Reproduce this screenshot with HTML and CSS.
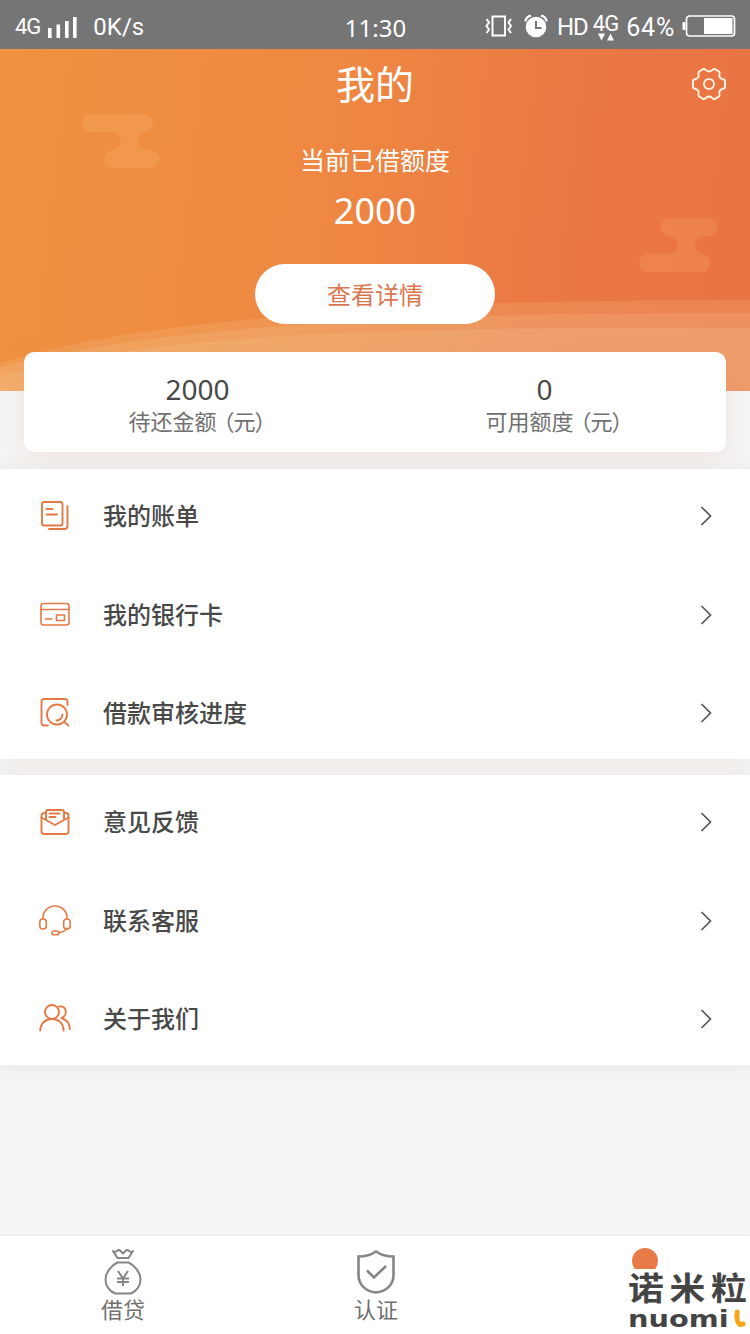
FILE: index.html
```html
<!DOCTYPE html>
<html lang="zh-CN">

<head>
  <meta charset="utf-8">
  <title>我的</title>
  <meta content="width=device-width, initial-scale=1" name="viewport" />
  <link rel="stylesheet" href="styles.css">
</head>

<body>
  <!-- Status bar -->
  <div class="status-bar">
    <div class="status-left">
      <span class="net">4G</span>
      <svg class="signal" width="30" height="24" viewBox="0 0 30 24" fill="#fff">
        <rect x="0" y="13" width="3.6" height="10"></rect>
        <rect x="8.5" y="9.5" width="3.6" height="13.5"></rect>
        <rect x="17" y="6" width="3.6" height="17"></rect>
        <rect x="25" y="2" width="3.6" height="21"></rect>
      </svg>
      <span class="speed">0K/s</span>
    </div>
    <span class="clock">11:30</span>
    <div class="status-right">
      <svg class="vibrate" width="28" height="24" viewBox="0 0 28 24" fill="none" stroke="#fff" stroke-width="2">
        <rect x="7.5" y="2.5" width="12.5" height="19"></rect>
        <path d="M1.5 5l2.5 3.5-2.5 3.5 2.5 3.5L1.5 19M26 5l-2.5 3.5 2.5 3.5-2.5 3.5L26 19"></path>
      </svg>
      <svg class="alarm" width="24" height="24" viewBox="0 0 24 24">
        <circle cx="12" cy="13" r="10.3" fill="#fff"></circle>
        <path d="M1.5 7.5Q2 2.5 7 1.6M22.5 7.5Q22 2.5 17 1.6" fill="none" stroke="#fff" stroke-width="2.2"></path>
        <path d="M12 7v7h5.5" fill="none" stroke="#757575" stroke-width="2"></path>
      </svg>
      <span class="hd">HD</span>
      <div class="data">
        <span>4G</span>
        <svg width="16" height="8" viewBox="0 0 16 8" fill="#fff">
          <path d="M0 0.5h7L3.5 7.5zM9 7.5h7L12.5 0.5z"></path>
        </svg>
      </div>
      <span class="percent">64%</span>
      <svg class="battery" width="54" height="22" viewBox="0 0 54 22">
        <rect x="4.5" y="1" width="48" height="20" rx="3" fill="none" stroke="#fff" stroke-width="1.7"></rect>
        <rect x="0.5" y="7" width="3" height="8" rx="1" fill="#fff"></rect>
        <rect x="22" y="3" width="28.5" height="16" fill="#fff"></rect>
      </svg>
    </div>
  </div>

  <!-- Header with current loan amount -->
  <div class="hero">
    <svg class="hero-bg" viewBox="0 0 750 342">
      <g fill="#f8e0b0" fill-opacity="0.15">
        <path d="M0 314C80 290 165 278 257 270C370 257 520 251 750 251V342H0z"></path>
        <path d="M0 319C70 299 165 287 257 279C370 269 520 264 750 264V342H0z"></path>
        <path d="M0 327C80 306 165 295 257 289C370 281 520 278 750 279V342H0z"></path>
      </g>
      <path fill="#f5a762" fill-opacity="0.4" d="M91 65h53a9 9 0 0 1 0 18c-8 2-8 14 0 18h7a9 9 0 0 1 0 18h-38a9 9 0 0 1 0-18c10-1 11-15 0-18h-22a9 9 0 0 1 0-18z"></path>
      <path fill="#f2935a" fill-opacity="0.45" d="M670 169h38a9 9 0 0 1 0 18h-7c-8 2-8 15 0 18a9 9 0 0 1 0 18h-53a9 9 0 0 1 0-18h22c10-1 11-16 0-18a9 9 0 0 1 0-18z"></path>
    </svg>
    <div class="title-bar">
      <h1 class="title">我的</h1>
      <svg class="settings" width="36" height="36" viewBox="0 0 36 36" fill="none" stroke="#fff1e2" stroke-width="2" stroke-linejoin="round">
        <path d="M12 3.2Q14 2.5 15 4.2Q18 6.5 21 4.2Q22 2.5 24 3.2L28 5.6Q29.2 6.8 28.3 8.6Q28 12.2 31.5 13Q34 13.5 34 15V21Q34 22.5 31.5 23Q28 24 28.3 27.4Q29.2 29.2 28 30.4L24 32.8Q22 33.5 21 31.8Q18 29.5 15 31.8Q14 33.5 12 32.8L8 30.4Q6.8 29.2 7.7 27.4Q8 24 4.5 23Q2 22.5 2 21V15Q2 13.5 4.5 13Q8 12.2 7.7 8.6Q6.8 6.8 8 5.6z"></path>
        <circle cx="18" cy="18" r="5"></circle>
      </svg>
    </div>
    <p class="hero-label">当前已借额度</p>
    <p class="hero-amount">2000</p>
    <a class="btn" href="#">查看详情</a>
  </div>

  <!-- Summary card -->
  <div class="summary">
    <div class="summary-item">
      <span class="summary-value">2000</span>
      <span class="summary-label">待还金额<span class="unit">（元）</span></span>
    </div>
    <div class="summary-item">
      <span class="summary-value">0</span>
      <span class="summary-label">可用额度<span class="unit">（元）</span></span>
    </div>
  </div>

  <div class="menu">
    <a class="menu-item" href="#">
      <svg class="menu-icon" viewBox="0 0 32 32">
        <rect x="3" y="2" width="20.5" height="23.5" rx="2"></rect>
        <path d="M7.5 9h6M7.5 14.5h10.5M28.5 6v20a3 3 0 0 1-3 3H10"></path>
      </svg>
      <span class="menu-text">我的账单</span>
      <svg class="arrow" viewBox="0 0 12 20"><path d="M1.5 1l9 9-9 9"></path></svg>
    </a>
    <a class="menu-item" href="#">
      <svg class="menu-icon thin" viewBox="0 0 32 32">
        <rect x="2" y="4.5" width="28" height="21.5" rx="2.5"></rect>
        <path d="M2 10.5h28M6.5 20h6.5"></path>
        <rect x="17.5" y="16" width="8" height="5.5"></rect>
      </svg>
      <span class="menu-text">我的银行卡</span>
      <svg class="arrow" viewBox="0 0 12 20"><path d="M1.5 1l9 9-9 9"></path></svg>
    </a>
    <a class="menu-item" href="#">
      <svg class="menu-icon" viewBox="0 0 32 32">
        <path d="M28.5 8V4.5A2.5 2.5 0 0 0 26 2H5a2.5 2.5 0 0 0-2.500 2.500V26A2.500 2.500 0 0 0 5 28.500h4M26 25.500l3.500 3"></path>
        <circle cx="18" cy="17.5" r="10"></circle>
        <path d="M23.5 17.5a6 6 0 0 1-6 6"></path>
      </svg>
      <span class="menu-text">借款审核进度</span>
      <svg class="arrow" viewBox="0 0 12 20"><path d="M1.5 1l9 9-9 9"></path></svg>
    </a>
  </div>

  <div class="menu">
    <a class="menu-item" href="#">
      <svg class="menu-icon" viewBox="0 0 32 32">
        <path d="M7 7H5a2.5 2.5 0 0 0-2.5 2.5v16A2.5 2.5 0 0 0 5 28h22a2.5 2.5 0 0 0 2.5-2.5v-16A2.5 2.5 0 0 0 27 7h-2"></path>
        <path d="M2.5 11.5L16 19l13.5-7.5M7 13.5V6a2 2 0 0 1 2-2h14a2 2 0 0 1 2 2v7.5M10.5 7.5h10M10.5 11h6"></path>
      </svg>
      <span class="menu-text">意见反馈</span>
      <svg class="arrow" viewBox="0 0 12 20"><path d="M1.5 1l9 9-9 9"></path></svg>
    </a>
    <a class="menu-item" href="#">
      <svg class="menu-icon thin" viewBox="0 0 32 32">
        <path d="M4 14v-1.5a12 11.5 0 0 1 24 0V14M28 23q-2 4-8 4.5"></path>
        <rect x="0.8" y="14" width="6.5" height="10" rx="3"></rect>
        <rect x="24.7" y="14" width="6.5" height="10" rx="3"></rect>
        <rect x="13" y="26" width="7" height="3.8" rx="1.9"></rect>
      </svg>
      <span class="menu-text">联系客服</span>
      <svg class="arrow" viewBox="0 0 12 20"><path d="M1.5 1l9 9-9 9"></path></svg>
    </a>
    <a class="menu-item" href="#">
      <svg class="menu-icon" viewBox="0 0 32 32">
        <circle cx="13" cy="9" r="7"></circle>
        <path d="M1.2 27.5C1.5 20 6.5 16 13 16s11.3 4 11.6 11.5M20 3.5c8-1.5 9 9 2.5 11.5 5 1.5 8 6 8.3 11"></path>
      </svg>
      <span class="menu-text">关于我们</span>
      <svg class="arrow" viewBox="0 0 12 20"><path d="M1.5 1l9 9-9 9"></path></svg>
    </a>
  </div>

  <!-- Bottom tabs -->
  <div class="tabs">
    <a class="tab" href="#">
      <svg width="38" height="48" viewBox="0 0 38 48" fill="none" stroke="#858585" stroke-width="2" stroke-linejoin="round">
        <path d="M13.5 10L9 3q2 1.500 4 0 2-2 3.500 0l2.500 2.500L21.500 3q1.500-2 3.500 0 2 1.500 4 0L24.500 10z"></path>
        <path d="M13.5 14.5h11C30 17 36.5 24 36.5 31.5 36.5 38 32 43 27 45.5H11C6 43 1.5 38 1.5 31.5 1.5 24 8 17 13.5 14.5z"></path>
        <path d="M14 23l5 7.5 5-7.5M19 30.5V38M13 30.5h12M13 34h12"></path>
      </svg>
      <span>借贷</span>
    </a>
    <a class="tab" href="#">
      <svg width="38" height="48" viewBox="0 0 38 48" fill="none" stroke="#858585" stroke-width="2.6">
        <path d="M19 3.5C14 7 8 8.5 1.5 8.5V27C1.5 37 9 43.5 19 44.5 29 43.5 36.5 37 36.5 27V8.5C30 8.5 24 7 19 3.5z"></path>
        <path d="M10 22.5l7 7L29 18"></path>
      </svg>
      <span>认证</span>
    </a>
    <a class="tab tab-mine" href="#">
      <span class="dot"></span>
    </a>
    <div class="brand">
      <span class="brand-cn">诺米粒</span>
      <div class="brand-en">
        <span>nuomi</span>
        <svg width="12" height="19" viewBox="0 0 12 19" fill="none" stroke="#f8a713" stroke-width="5" stroke-linecap="round">
          <path d="M3.2 3C2.5 9 3 14.5 6.5 15.5L9 15"></path>
        </svg>
      </div>
    </div>
  </div>
</body>

</html>
```

FILE: styles.css
```css
:root {
  --orange: #e37a46;
  --bg: #f4f4f4;
  --text: #484848;
  --sub: #707070;
}

* {
  box-sizing: border-box;
}

body {
  width: 750px;
  height: 1334px;
  margin: 0;
  display: flex;
  flex-direction: column;
  overflow: hidden;
  background-color: var(--bg);
  color: var(--text);
  font-family: "Noto Sans", "Noto Sans CJK SC", sans-serif;
}

h1,
p {
  margin: 0;
  font-weight: normal;
}

a {
  color: inherit;
  text-decoration: none;
}

svg {
  flex-shrink: 0;
}

/* Status bar */
.status-bar {
  height: 49px;
  flex-shrink: 0;
  display: grid;
  grid-template-columns: 1fr auto 1fr;
  align-items: center;
  padding: 4px 14px 0 15px;
  background-color: #757575;
  color: #fff;
  font-family: Roboto, sans-serif;
  font-size: 25px;
  line-height: 44px;
}

.status-left,
.status-right {
  display: flex;
  align-items: center;
}

.status-right {
  justify-content: flex-end;
}

.net {
  font-size: 22px;
  letter-spacing: -1px;
}

.signal {
  margin: 0 15px 0 8px;
}

.speed {
  font-size: 24px;
}

.clock {
  font-family: "Noto Sans", sans-serif;
  font-size: 24px;
  padding-top: 2px;
}

.vibrate {
  margin-top: -2px;
}

.alarm {
  margin: -2px 9px 0 11px;
}

.hd {
  font-size: 24px;
  letter-spacing: -1px;
  margin-right: 5px;
}

.data {
  display: flex;
  flex-direction: column;
  align-items: center;
  font-size: 22px;
  line-height: 19px;
  letter-spacing: -1px;
}

.percent {
  margin: 0 7px 0 8px;
  padding-top: 2px;
  letter-spacing: 0.8px;
}

.battery {
  margin-top: -2px;
}

/* Header */
.hero {
  position: relative;
  height: 342px;
  flex-shrink: 0;
  display: flex;
  flex-direction: column;
  align-items: center;
  background: linear-gradient(97deg, #f09240 0%, #ee8742 45%, #eb7943 72%, #ea7444 100%);
  color: #fff;
}

.hero-bg {
  position: absolute;
  inset: 0;
}

.title-bar {
  position: relative;
  width: 100%;
  height: 70px;
  padding: 0 23px;
  display: grid;
  grid-template-columns: 1fr auto 1fr;
  align-items: center;
}

.title {
  grid-column: 2;
  font-size: 39px;
  line-height: 70px;
}

.settings {
  justify-self: end;
}

.hero-label {
  position: relative;
  margin-top: 22px;
  font-size: 25px;
  line-height: 38px;
}

.hero-amount {
  position: relative;
  margin-top: 7px;
  font-size: 36px;
  line-height: 50px;
}

.btn {
  position: relative;
  width: 240px;
  height: 60px;
  margin-top: 28px;
  border-radius: 30px;
  background-color: #fff;
  color: #d97750;
  font-size: 24px;
  line-height: 61px;
  text-align: center;
}

/* Summary card */
.summary {
  position: relative;
  height: 100px;
  flex-shrink: 0;
  margin: -39px 24px 17px;
  padding-top: 20px;
  display: flex;
  border-radius: 10px;
  background-color: #fff;
  box-shadow: 0 4px 20px rgba(205, 150, 110, 0.15);
}

.summary-item {
  width: 347px;
  display: flex;
  flex-direction: column;
  align-items: center;
}

.summary-value {
  font-size: 28px;
  line-height: 34px;
}

.summary-label {
  padding-left: 9px;
  color: var(--sub);
  font-size: 22px;
  line-height: 31px;
}

.summary-item + .summary-item .summary-label {
  padding-left: 29px;
}

.unit {
  margin-left: -4px;
  letter-spacing: -1px;
}

/* Menu groups */
.menu {
  position: relative;
  height: 290px;
  flex-shrink: 0;
  margin-bottom: 16px;
  display: flex;
  flex-direction: column;
  gap: 4.5px;
  background-color: #fff;
  box-shadow: 0 0 16px rgba(205, 160, 130, 0.16);
}

.menu-item {
  height: 94px;
  flex-shrink: 0;
  padding: 0 38px 0 39px;
  display: flex;
  align-items: center;
}

.menu-icon {
  width: 32px;
  height: 32px;
  fill: none;
  stroke: var(--orange);
  stroke-width: 1.9;
  stroke-linecap: round;
  stroke-linejoin: round;
}

.menu-icon.thin {
  stroke-width: 1.6;
}

.menu-text {
  flex: 1;
  margin-left: 32px;
  padding-bottom: 3px;
  font-size: 24px;
  font-weight: 500;
}

.arrow {
  width: 12px;
  height: 20px;
  fill: none;
  stroke: #555;
  stroke-width: 1.7;
}

/* Bottom tabs */
.tabs {
  position: relative;
  height: 98px;
  flex-shrink: 0;
  margin-top: auto;
  display: grid;
  grid-template-columns: 246px 260px 244px;
  background-color: #fff;
  box-shadow: 0 -1px 2px rgba(0, 0, 0, 0.04);
}

.tab {
  display: flex;
  flex-direction: column;
  align-items: center;
  padding-top: 12px;
  color: var(--sub);
  font-size: 22px;
  line-height: 26px;
}

.tab-mine {
  padding-left: 34px;
}

.dot {
  width: 26px;
  height: 21px;
  overflow: hidden;
}

.dot::before {
  content: "";
  display: block;
  width: 26px;
  height: 26px;
  border-radius: 50%;
  background-color: #e87a47;
}

/* Brand mark lies over the last tab */
.brand {
  position: absolute;
  left: 628px;
  top: 32px;
  color: #444;
}

.brand-cn {
  display: block;
  width: 108px;
  font-family: "Noto Sans CJK SC", sans-serif;
  font-size: 32px;
  font-weight: bold;
  line-height: 36px;
  letter-spacing: 5px;
  white-space: nowrap;
  transform: scaleX(1.12);
  transform-origin: left;
}

.brand-en {
  display: flex;
  height: 22px;
  margin-top: 5px;
  font-family: "DejaVu Sans", sans-serif;
  font-size: 23px;
  font-weight: bold;
  line-height: 20px;
}

.brand-en span {
  width: 106px;
  transform: scaleX(1.25);
  transform-origin: left;
}
```
